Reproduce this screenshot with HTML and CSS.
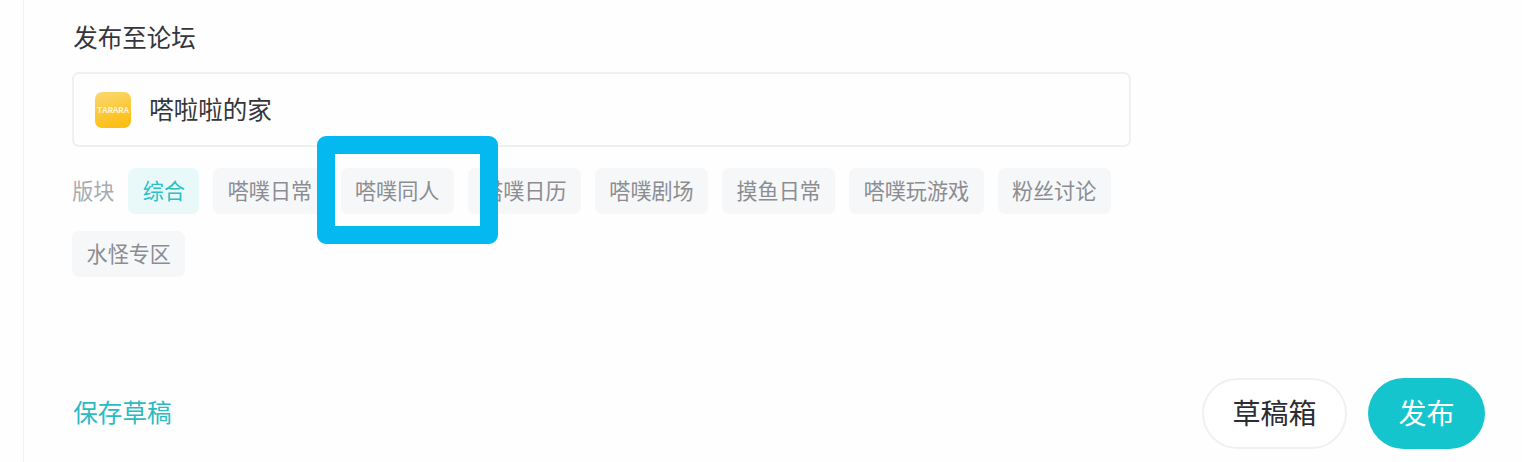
FILE: index.html
```html
<!DOCTYPE html>
<html lang="zh-CN">
<head>
  <meta charset="UTF-8">
  <meta name="viewport" content="width=device-width, initial-scale=1.0">
  <title>发布</title>
  <link rel="stylesheet" href="styles.css">
</head>
<body>

  <div class="editor">
    <h2 class="title">发布至论坛</h2>

    <div class="forum">
      <svg class="forum-icon" width="36" height="36" viewBox="0 0 36 36">
        <defs>
          <linearGradient id="gold" x1="0" y1="0" x2="0.3" y2="1">
            <stop offset="0" stop-color="#fbd873"/>
            <stop offset="1" stop-color="#fbbf16"/>
          </linearGradient>
        </defs>
        <rect width="36" height="36" rx="7" fill="url(#gold)"/>
        <text class="logo-text" x="2" y="21" textLength="32" lengthAdjust="spacingAndGlyphs">TARARA</text>
      </svg>
      <span class="forum-name">嗒啦啦的家</span>
    </div>

    <div class="boards">
      <span class="boards-label">版块</span>
      <button class="tag active">综合</button>
      <button class="tag">嗒噗日常</button>
      <div class="tag-wrap">
        <button class="tag">嗒噗同人</button>
        <div class="highlight"></div>
      </div>
      <button class="tag">嗒噗日历</button>
      <button class="tag">嗒噗剧场</button>
      <button class="tag">摸鱼日常</button>
      <button class="tag">嗒噗玩游戏</button>
      <button class="tag">粉丝讨论</button>
      <button class="tag">水怪专区</button>
    </div>

    <div class="footer">
      <a class="save">保存草稿</a>
      <div class="actions">
        <button class="btn">草稿箱</button>
        <button class="btn publish">发布</button>
      </div>
    </div>
  </div>

</body>
</html>
```
FILE: styles.css
```css
* {
  box-sizing: border-box;
}

body {
  margin: 0;
  padding-left: 23px;
  background: #fefefe;
  color: #34363a;
  font-family: "Noto Sans CJK SC", sans-serif;
}

button {
  margin: 0;
  border: 0;
  font-family: inherit;
}

.editor {
  display: flex;
  flex-direction: column;
  height: 462px;
  padding: 19px 37px 13px 48.2px;
  border-left: 1px solid #f0f1f2;
}

.title {
  margin: 0 0 18px;
  padding-left: 1px;
  font-size: 24.5px;
  font-weight: 400;
  line-height: 35px;
}

.forum {
  display: flex;
  align-items: center;
  gap: 18px;
  width: 1059px;
  height: 75px;
  padding-left: 21px;
  border: 2px solid #f0f0f1;
  border-radius: 7px;
  font-size: 24.5px;
}

.forum-icon {
  display: block;
}

.forum-name {
  padding-bottom: 2px;
}

.logo-text {
  fill: #fff6d8;
  font: bold 9.5px "Liberation Mono", monospace;
}

.boards {
  display: flex;
  flex-wrap: wrap;
  align-items: center;
  gap: 17px 14px;
  width: 1059px;
  margin-top: 21px;
}

.boards-label {
  padding-bottom: 3px;
  color: #a9abaf;
  font-size: 21.1px;
}

.tag {
  display: block;
  height: 46px;
  padding: 0 14.4px 2px;
  border-radius: 7px;
  background: #f6f7f8;
  color: #8b8d92;
  font-size: 21.1px;
  line-height: 44px;
}

.tag.active {
  background: #e9f9fa;
  color: #2bbfc6;
}

.tag-wrap {
  position: relative;
}

/* marker frame drawn over the neighbouring tags */
.highlight {
  position: absolute;
  top: -32px;
  left: -24px;
  z-index: 1;
  width: 181px;
  height: 108px;
  border: 18px solid #04b8f0;
  border-radius: 9px;
}

.footer {
  display: flex;
  align-items: center;
  justify-content: space-between;
  margin-top: auto;
}

.save {
  padding: 0 0 6px 1px;
  color: #2bbac3;
  font-size: 24.6px;
}

.actions {
  display: flex;
  gap: 21px;
}

.btn {
  width: 145px;
  height: 71px;
  padding: 0 0 4px;
  border: 2px solid #f0f0f1;
  border-radius: 36px;
  background: #fff;
  color: #2b2d33;
  font-size: 28px;
}

.btn.publish {
  width: 117px;
  border: 0;
  background: #15c5ce;
  color: #fff;
}
```
